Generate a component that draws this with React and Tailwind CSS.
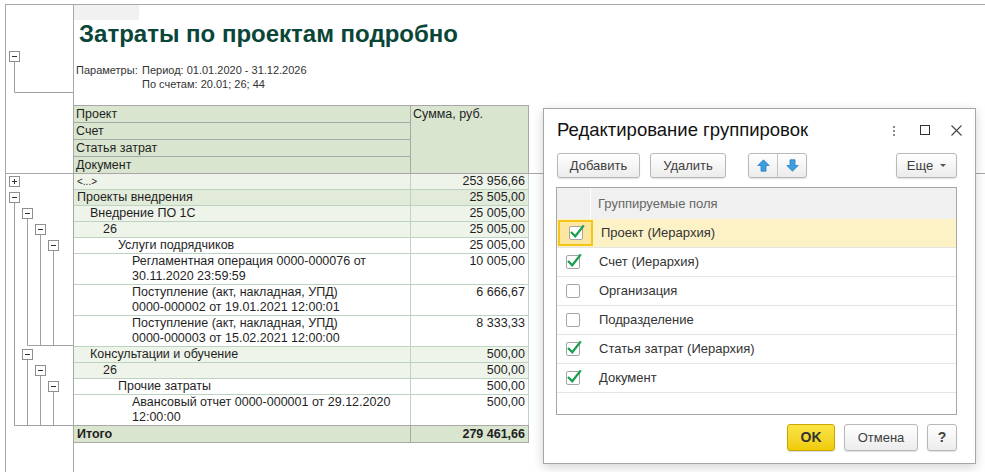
import React from 'react';

const rows = [
  { text: '<...>', sum: '253 956,66', pad: 'pl-[3px]', bg: 'bg-[#eef4ea]', small: true },
  { text: 'Проекты внедрения', sum: '25 505,00', pad: 'pl-[3px]', bg: 'bg-[#e2ebda]' },
  { text: 'Внедрение ПО 1С', sum: '25 005,00', pad: 'pl-[16px]', bg: 'bg-[#eef4ea]' },
  { text: '26', sum: '25 005,00', pad: 'pl-[29px]', bg: 'bg-[#eef4ea]' },
  { text: 'Услуги подрядчиков', sum: '25 005,00', pad: 'pl-[44px]', bg: 'bg-white' },
  { text: ['Регламентная операция 0000-000076 от', '30.11.2020 23:59:59'], sum: '10 005,00', pad: 'pl-[58px]', bg: 'bg-white' },
  { text: ['Поступление (акт, накладная, УПД)', '0000-000002 от 19.01.2021 12:00:01'], sum: '6 666,67', pad: 'pl-[58px]', bg: 'bg-white' },
  { text: ['Поступление (акт, накладная, УПД)', '0000-000003 от 15.02.2021 12:00:00'], sum: '8 333,33', pad: 'pl-[58px]', bg: 'bg-white' },
  { text: 'Консультации и обучение', sum: '500,00', pad: 'pl-[16px]', bg: 'bg-[#eef4ea]' },
  { text: '26', sum: '500,00', pad: 'pl-[29px]', bg: 'bg-[#eef4ea]' },
  { text: 'Прочие затраты', sum: '500,00', pad: 'pl-[44px]', bg: 'bg-white' },
  { text: ['Авансовый отчет 0000-000001 от 29.12.2020', '12:00:00'], sum: '500,00', pad: 'pl-[58px]', bg: 'bg-white', last: true },
];

const fields = [
  { name: 'Проект (Иерархия)', on: true, current: true },
  { name: 'Счет (Иерархия)', on: true },
  { name: 'Организация', on: false },
  { name: 'Подразделение', on: false },
  { name: 'Статья затрат (Иерархия)', on: true },
  { name: 'Документ', on: true },
];

// toggle box of the row grouping tree, x = left pixel, top = row top
const Box = ({ x, top, plus }) => (
  <g>
    <rect x={x + 0.5} y={top + 2.5} width="10" height="10" fill="white" stroke="#8f8f8f" />
    <line x1={x + 3} y1={top + 7.5} x2={x + 8} y2={top + 7.5} stroke="#333" />
    {plus && <line x1={x + 5.5} y1={top + 5} x2={x + 5.5} y2={top + 10} stroke="#333" />}
  </g>
);

const Btn = ({ children, className = '' }) => (
  <button className={`h-[25px] rounded-[3px] border border-[#b8b8b8] bg-linear-to-b from-white to-[#ececec] text-[13px] text-[#404040] shadow-[0_1px_1px_rgba(0,0,0,0.12)] ${className}`}>
    {children}
  </button>
);

const Check = ({ on }) => (
  <span className="relative block w-[14px] h-[14px] border border-[#a5a5a5] rounded-[2px] bg-white">
    {on && (
      <svg className="absolute left-0 top-[-4px]" width="16" height="16" viewBox="0 0 16 16">
        <path d="M1 9 L5.3 13.3 L13.8 2.4" fill="none" stroke="#1b9e50" strokeWidth="2.3" />
      </svg>
    )}
  </span>
);

const Arrow = ({ down }) => (
  <svg width="13" height="13" viewBox="0 0 13 13" className={down ? 'rotate-180' : ''}>
    <path d="M6.5 0.8 L12.2 6.5 L9 6.5 L9 12.2 L4 12.2 L4 6.5 L0.8 6.5 Z" fill="#3d9ee0" stroke="#2b7fc2" strokeWidth="0.8" />
  </svg>
);

export default function App() {
  return (
    <div className="relative w-[985px] h-[472px] overflow-hidden bg-white pt-[4px] pl-[5px] font-['Liberation_Sans',Arial,sans-serif] text-[#1f1f1f]">
      <div className="flex h-full flex-col border-l border-t border-[#a8a8a8]">
        {/* top band: title, parameters, column headers */}
        <div className="flex h-[169px] border-b border-[#a8a8a8]">
          <div className="w-[68px] border-r border-[#a8a8a8]">
            <svg width="67" height="168" viewBox="6 5 67 168">
              <path d="M14.5 61.5 V92.5 H73" fill="none" stroke="#a0a0a0" />
              <Box x={9} top={49} />
            </svg>
          </div>
          <div className="flex-1">
            <div className="h-[15px] w-[65px] bg-[#f1f1f1]" />
            <div className="pl-[5px] text-[24px] leading-[28px] font-bold text-[#0a4638]">Затраты по проектам подробно</div>
            <div className="mt-[15px] flex pl-[2px] text-[11px] leading-[14px] text-[#333]">
              <div className="w-[66px]">Параметры:</div>
              <div>
                <div>Период: 01.01.2020 - 31.12.2026</div>
                <div>По счетам: 20.01; 26; 44</div>
              </div>
            </div>
            <div className="mt-[14px] flex w-[455px] border-t border-r border-[#a8a8a8] bg-[#d9e5cf] text-[12.5px] leading-[16px]">
              <div className="w-[336px]">
                <div className="h-[17px] border-b border-[#a8a8a8] pl-[2px]">Проект</div>
                <div className="h-[17px] border-b border-[#a8a8a8] pl-[2px]">Счет</div>
                <div className="h-[17px] border-b border-[#a8a8a8] pl-[2px]">Статья затрат</div>
                <div className="h-[16px] pl-[2px]">Документ</div>
              </div>
              <div className="flex-1 border-l border-[#a8a8a8] pl-[2px]">Сумма, руб.</div>
            </div>
          </div>
        </div>

        {/* bottom band: grouped rows */}
        <div className="flex flex-1">
          <div className="w-[68px] border-r border-[#a8a8a8]">
            <svg width="67" height="298" viewBox="6 174 67 298">
              <g fill="none" stroke="#a0a0a0">
                <path d="M14.5 202.5 V425.5 H73" />
                <path d="M27.5 218.5 V345.5 H73" />
                <path d="M40.5 234.5 V345.5" />
                <path d="M53.5 250.5 V345.5" />
                <path d="M27.5 359.5 V425.5" />
                <path d="M40.5 375.5 V425.5" />
                <path d="M53.5 391.5 V425.5" />
              </g>
              <Box x={9} top={174} plus />
              <Box x={9} top={190} />
              <Box x={22} top={206} />
              <Box x={35} top={222} />
              <Box x={48} top={238} />
              <Box x={22} top={347} />
              <Box x={35} top={363} />
              <Box x={48} top={379} />
            </svg>
          </div>
          <div className="flex-1 text-[12.5px] leading-[15px]">
            {rows.map((r, i) => (
              <div key={i} className={`flex w-[455px] border-r border-[#bdd3c2] ${r.last ? '' : 'border-b'} ${r.bg}`}>
                <div className={`w-[336px] ${r.pad}`}>
                  {Array.isArray(r.text) ? (
                    r.text.map((l, j) => <div key={j}>{l}</div>)
                  ) : (
                    <div className={r.small ? 'text-[10px]' : ''}>{r.text}</div>
                  )}
                </div>
                <div className="flex-1 border-l border-[#bdd3c2] pr-[3px] text-right">{r.sum}</div>
              </div>
            ))}
            <div className="flex w-[455px] border-y border-r border-[#a8a8a8] bg-[#d9e5cf] font-bold leading-[16px]">
              <div className="w-[336px] pl-[3px]">Итого</div>
              <div className="flex-1 border-l border-[#a8a8a8] pr-[3px] text-right">279 461,66</div>
            </div>
          </div>
        </div>
      </div>

      {/* dialog window */}
      <div className="absolute left-[543px] top-[108px] w-[433px] h-[356px] border border-[#a6a6a6] bg-white shadow-[0_3px_10px_rgba(0,0,0,0.18)]">
        <div className="flex items-center pl-[13px] pr-[13px] pt-[10px]">
          <div className="text-[18.5px] leading-[22px] text-[#111]">Редактирование группировок</div>
          <div className="ml-auto flex flex-col gap-[2px] pt-[1px]">
            <span className="block w-[2px] h-[2px] bg-[#8a8a8a]" />
            <span className="block w-[2px] h-[2px] bg-[#8a8a8a]" />
            <span className="block w-[2px] h-[2px] bg-[#8a8a8a]" />
          </div>
          <div className="ml-[25px] w-[10px] h-[10px] border border-[#333]" />
          <svg className="ml-[21px]" width="11" height="11" viewBox="0 0 11 11">
            <path d="M0.5 0.5 L10.5 10.5 M10.5 0.5 L0.5 10.5" stroke="#444" strokeWidth="1.1" />
          </svg>
        </div>

        <div className="pl-[12px] pr-[18px]">
          <div className="mt-[12px] flex items-center pl-[1px]">
            <Btn className="w-[83px]">Добавить</Btn>
            <Btn className="ml-[10px] w-[76px]">Удалить</Btn>
            <div className="ml-[22px] flex h-[25px] w-[59px] rounded-[3px] border border-[#b8b8b8] bg-linear-to-b from-white to-[#ececec] shadow-[0_1px_1px_rgba(0,0,0,0.12)]">
              <div className="flex w-[29px] items-center justify-center border-r border-[#c4c4c4]">
                <Arrow />
              </div>
              <div className="flex flex-1 items-center justify-center">
                <Arrow down />
              </div>
            </div>
            <Btn className="ml-auto flex w-[61px] items-center justify-center gap-[7px]">
              <span>Еще</span>
              <span className="block w-0 h-0 border-x-[3px] border-t-[3px] border-x-transparent border-t-[#555]" />
            </Btn>
          </div>

          <div className="mt-[9px] h-[228px] border border-[#a6a6a6]">
            <div className="flex h-[31px] bg-[#f0f0f0] text-[13px] text-[#666]">
              <div className="w-[34px] border-r border-white" />
              <div className="flex items-center pl-[7px]">Группируемые поля</div>
            </div>
            {fields.map((f) => (
              <div key={f.name} className={`flex h-[29px] border-b border-[#e4e4e4] text-[13px] text-[#333] ${f.current ? 'bg-[#fdf2c6]' : ''}`}>
                <div className={`flex w-[35px] items-center pl-[9px] ${f.current ? 'm-[1px] w-[33px] pl-[8px] border-2 border-[#f5c518] bg-[#fde6a0]' : ''}`}>
                  <Check on={f.on} />
                </div>
                <div className="flex items-center pl-[7px]">{f.name}</div>
              </div>
            ))}
          </div>

          <div className="mt-[9px] flex justify-end gap-[9px]">
            <button className="h-[27px] w-[48px] rounded-[3px] border border-[#c8a800] bg-linear-to-b from-[#fae443] to-[#efcc00] text-[14px] font-bold text-[#333] shadow-[0_1px_1px_rgba(0,0,0,0.15)]">
              OK
            </button>
            <Btn className="h-[27px] w-[74px]">Отмена</Btn>
            <Btn className="h-[27px] w-[30px] text-[14px] font-bold text-[#333]">?</Btn>
          </div>
        </div>
      </div>
    </div>
  );
}
